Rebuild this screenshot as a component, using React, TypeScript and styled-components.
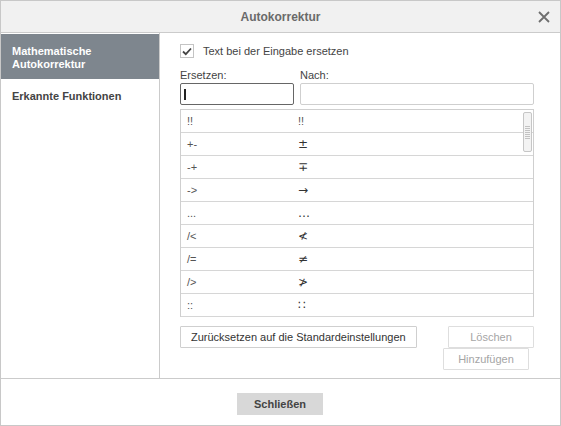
import React from "react";
import styled, { createGlobalStyle } from "styled-components";

const Global = createGlobalStyle`
  html, body { margin: 0; padding: 0; background: #fff; }
  body { font-family: "Liberation Sans", Arial, sans-serif; font-size: 11px; color: #444; }
  * { box-sizing: border-box; }
`;

const Dialog = styled.div`
  width: 561px;
  height: 426px;
  border: 1px solid #c8c8c8;
  display: flex;
  flex-direction: column;
  background: #fff;
`;

const Header = styled.div`
  height: 32px;
  flex: none;
  background: #f1f1f1;
  border-bottom: 1px solid #cbcbcb;
  display: flex;
  align-items: center;
  justify-content: center;
  position: relative;
`;

const Title = styled.div`
  font-size: 12px;
  font-weight: 700;
  color: #6a6a6a;
`;

const Close = styled.button`
  position: absolute;
  right: 8px;
  top: 8px;
  width: 16px;
  height: 16px;
  padding: 0;
  border: none;
  background: transparent;
  display: flex;
  align-items: center;
  justify-content: center;
`;

const Body = styled.div`
  flex: 1;
  display: flex;
  min-height: 0;
`;

const Sidebar = styled.div`
  width: 159px;
  flex: none;
  border-right: 1px solid #cbcbcb;
  padding-top: 1px;
  display: flex;
  flex-direction: column;
`;

const NavItem = styled.div<{ $active?: boolean }>`
  padding: ${(p) => (p.$active ? "11px 11px 8px" : "11px 11px 10px")};
  font-weight: 700;
  font-size: 11px;
  line-height: 13px;
  color: ${(p) => (p.$active ? "#fff" : "#444")};
  background: ${(p) => (p.$active ? "#7e868e" : "transparent")};
  min-height: ${(p) => (p.$active ? "45px" : "34px")};
`;

const Content = styled.div`
  flex: 1;
  padding: 11px 26px 0 20px;
  display: flex;
  flex-direction: column;
`;

const CheckRow = styled.label`
  display: flex;
  align-items: center;
  gap: 9px;
  height: 14px;
  color: #444;
`;

const CheckBox = styled.span`
  width: 14px;
  height: 14px;
  border: 1px solid #c4c4c4;
  display: flex;
  align-items: center;
  justify-content: center;
  background: #fff;
`;

const Fields = styled.div`
  display: grid;
  grid-template-columns: 114px 234px;
  column-gap: 6px;
  margin-top: 11px;
`;

const Field = styled.div`
  display: flex;
  flex-direction: column;
  gap: 1px;
`;

const Label = styled.div`
  font-size: 11px;
  line-height: 13px;
  color: #444;
`;

const InputBox = styled.div<{ $focused?: boolean }>`
  height: 22px;
  border: 1px solid ${(p) => (p.$focused ? "#666" : "#cfcfcf")};
  border-radius: 2px;
  display: flex;
  align-items: center;
  padding-left: 3px;
  background: #fff;
`;

const Caret = styled.span`
  width: 2px;
  height: 11px;
  background: #222;
`;

const List = styled.div`
  margin-top: 4px;
  height: 208px;
  border: 1px solid #cfcfcf;
  border-bottom: none;
  position: relative;
`;

const Row = styled.div`
  height: 23px;
  display: grid;
  grid-template-columns: 111px 1fr;
  align-items: center;
  padding-left: 6px;
  border-bottom: 1px solid #d6d6d6;
  font-size: 11px;
  color: #444;
`;

const Cell = styled.span<{ $math?: boolean }>`
  color: ${(p) => (p.$math ? "#333" : "#555")};
  font-family: ${(p) => (p.$math ? '"DejaVu Sans", "Liberation Sans", sans-serif' : "inherit")};
  font-size: ${(p) => (p.$math ? "12px" : "11px")};
`;

const Scrollbar = styled.div`
  position: absolute;
  right: 1px;
  top: 2px;
  width: 9px;
  height: 40px;
  border: 1px solid #c6c6c6;
  border-radius: 2px;
  background: #f3f3f3;
  display: flex;
  flex-direction: column;
  align-items: center;
  justify-content: center;
  gap: 1px;
`;

const Grip = styled.span`
  width: 5px;
  height: 1px;
  background: #c2c2c2;
`;

const Actions = styled.div`
  margin-top: 9px;
  display: flex;
  justify-content: space-between;
  align-items: flex-start;
`;

const RightButtons = styled.div`
  display: flex;
  flex-direction: column;
  align-items: flex-end;
`;

const Button = styled.button<{ $disabled?: boolean; $shift?: number }>`
  height: 22px;
  min-width: 86px;
  padding: 0 10px;
  border: 1px solid ${(p) => (p.$disabled ? "#dedede" : "#cfcfcf")};
  border-radius: 1px;
  background: #fff;
  font-family: "Liberation Sans", Arial, sans-serif;
  font-size: 11px;
  color: ${(p) => (p.$disabled ? "#a5a5a5" : "#333")};
  margin-right: ${(p) => p.$shift ?? 0}px;
  cursor: default;
`;

const Footer = styled.div`
  height: 47px;
  flex: none;
  border-top: 1px solid #cbcbcb;
  display: flex;
  justify-content: center;
  padding-top: 14px;
  padding-right: 1px;
`;

const PrimaryButton = styled.button`
  width: 86px;
  height: 22px;
  border: none;
  background: #d8d8d8;
  font-family: "Liberation Sans", Arial, sans-serif;
  font-size: 11px;
  font-weight: 700;
  color: #444;
`;

const rows: [string, string][] = [
  ["!!", "!!"],
  ["+-", "±"],
  ["-+", "∓"],
  ["->", "→"],
  ["...", "…"],
  ["/<", "≮"],
  ["/=", "≠"],
  ["/>", "≯"],
  ["::", "∷"],
];

export default function App() {
  return (
    <>
      <Global />
      <Dialog>
        <Header>
          <Title>Autokorrektur</Title>
          <Close aria-label="Schließen">
            <svg width="12" height="12" viewBox="0 0 12 12">
              <path d="M1 1L11 11M11 1L1 11" stroke="#6e6e6e" strokeWidth="1.8" />
            </svg>
          </Close>
        </Header>
        <Body>
          <Sidebar>
            <NavItem $active>
              Mathematische
              <br />
              Autokorrektur
            </NavItem>
            <NavItem>Erkannte Funktionen</NavItem>
          </Sidebar>
          <Content>
            <CheckRow>
              <CheckBox>
                <svg width="10" height="9" viewBox="0 0 10 9">
                  <path d="M1 4.5L3.8 7.2L9 1.5" stroke="#444" strokeWidth="1.8" fill="none" />
                </svg>
              </CheckBox>
              Text bei der Eingabe ersetzen
            </CheckRow>
            <Fields>
              <Field>
                <Label>Ersetzen:</Label>
                <InputBox $focused>
                  <Caret />
                </InputBox>
              </Field>
              <Field>
                <Label>Nach:</Label>
                <InputBox />
              </Field>
            </Fields>
            <List>
              {rows.map(([a, b]) => (
                <Row key={a}>
                  <Cell>{a}</Cell>
                  <Cell $math={b !== "!!"}>{b}</Cell>
                </Row>
              ))}
              <Scrollbar>
                {Array.from({ length: 7 }).map((_, i) => (
                  <Grip key={i} />
                ))}
              </Scrollbar>
            </List>
            <Actions>
              <Button>Zurücksetzen auf die Standardeinstellungen</Button>
              <RightButtons>
                <Button $disabled>Löschen</Button>
                <Button $disabled $shift={5}>
                  Hinzufügen
                </Button>
              </RightButtons>
            </Actions>
          </Content>
        </Body>
        <Footer>
          <PrimaryButton>Schließen</PrimaryButton>
        </Footer>
      </Dialog>
    </>
  );
}
